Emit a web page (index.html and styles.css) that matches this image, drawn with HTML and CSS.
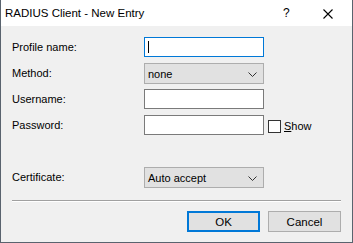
FILE: index.html
```html
<!DOCTYPE html>
<html lang="en">
<head>
  <meta charset="UTF-8">
  <title>RADIUS Client - New Entry</title>
  <link rel="stylesheet" href="styles.css">
</head>
<body>
  <div class="window">
    <div class="titlebar">
      <span class="title">RADIUS Client - New Entry</span>
      <span class="help">?</span>
      <span class="close">
        <svg width="10" height="10" viewBox="0 0 10 10"><path d="M0.5 0.5 L9.5 9.5 M9.5 0.5 L0.5 9.5" stroke="#000" stroke-width="1.1" fill="none"/></svg>
      </span>
    </div>

    <div class="content">
      <form class="form">
        <label class="label">Profile name:</label>
        <div class="field focused"><span class="caret"></span></div>
        <div></div>

        <label class="label">Method:</label>
        <div class="combo">
          <span>none</span>
          <svg width="9" height="5" viewBox="0 0 9 5"><path d="M0.5 0.5 L4.5 4.5 L8.5 0.5" stroke="#333" fill="none"/></svg>
        </div>
        <div></div>

        <label class="label">Username:</label>
        <div class="field"></div>
        <div></div>

        <label class="label">Password:</label>
        <div class="field"></div>
        <div class="check">
          <span class="box"></span>
          <span><u>S</u>how</span>
        </div>

        <div></div><div></div><div></div>

        <label class="label">Certificate:</label>
        <div class="combo">
          <span>Auto accept</span>
          <svg width="9" height="5" viewBox="0 0 9 5"><path d="M0.5 0.5 L4.5 4.5 L8.5 0.5" stroke="#333" fill="none"/></svg>
        </div>
        <div></div>
      </form>

      <div class="separator"></div>

      <div class="buttons">
        <button class="btn default" type="button">OK</button>
        <button class="btn" type="button">Cancel</button>
      </div>
    </div>
  </div>
</body>
</html>
```

FILE: styles.css
```css
body {
  margin: 0;
  font-family: "Liberation Sans", Arial, sans-serif;
  font-size: 11px;
  color: #000;
}
.window {
  width: 353px;
  height: 243px;
  box-sizing: border-box;
  border: 1px solid #59636e;
  border-top: none;
  background: #f0f0f0;
}
.titlebar {
  height: 26px;
  background: #fff;
  display: flex;
  align-items: center;
  padding-left: 4px;
}
.title {
  font-size: 11.5px;
  flex: 1;
}
.help {
  font-size: 12px;
  width: 40px;
}
.close {
  width: 29px;
  display: flex;
  margin-top: 1px;
}
.content {
  padding: 11px 11px 0 11px;
}
.form {
  display: grid;
  grid-template-columns: 132px 120px auto;
  grid-auto-rows: 26px;
  margin: 0;
}
.label {
  line-height: 20px;
}
.field {
  height: 20px;
  box-sizing: border-box;
  border: 1px solid #7a7a7a;
  background: #fff;
  position: relative;
}
.field.focused {
  border-color: #0078d7;
}
.caret {
  position: absolute;
  left: 3px;
  top: 3px;
  width: 1px;
  height: 12px;
  background: #000;
}
.combo {
  height: 21px;
  box-sizing: border-box;
  border: 1px solid #adadad;
  background: #e1e1e1;
  display: flex;
  align-items: center;
  justify-content: space-between;
  padding: 0 6px 0 3px;
}
.combo svg {
  margin-top: 1px;
}
.check {
  display: flex;
  align-items: center;
  gap: 3px;
  padding-left: 4px;
  height: 20px;
  margin-top: 1px;
}
.box {
  width: 13px;
  height: 13px;
  box-sizing: border-box;
  border: 1px solid #333;
  background: #fff;
}
.separator {
  margin-top: 7px;
  border-top: 1px solid #a0a0a0;
  border-bottom: 1px solid #fff;
  width: 329px;
}
.buttons {
  display: flex;
  justify-content: flex-end;
  gap: 8px;
  margin-top: 9px;
  width: 329px;
}
.btn {
  width: 73px;
  height: 21px;
  box-sizing: border-box;
  border: 1px solid #adadad;
  background: #e1e1e1;
  font-family: "Liberation Sans", Arial, sans-serif;
  font-size: 11.5px;
  padding: 0;
  color: #000;
}
.btn.default {
  border: 2px solid #0078d7;
}
```
